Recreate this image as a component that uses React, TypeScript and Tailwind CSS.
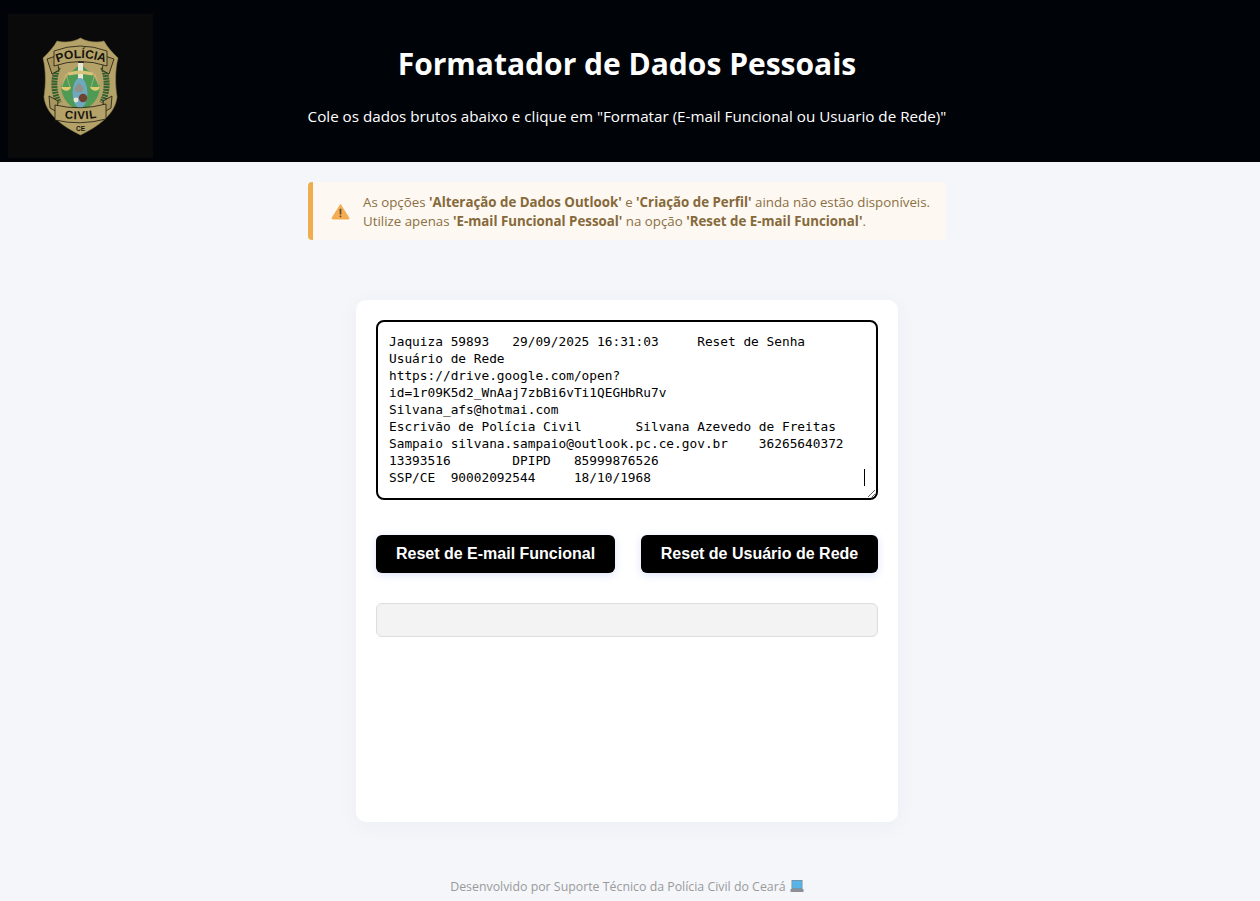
const RAW_DATA = `Jaquiza 59893\t29/09/2025 16:31:03\tReset de Senha
Usuário de Rede
https://drive.google.com/open?
id=1r09K5d2_WnAaj7zbBi6vTi1QEGHbRu7v
Silvana_afs@hotmai.com
Escrivão de Polícia Civil\tSilvana Azevedo de Freitas
Sampaio silvana.sampaio@outlook.pc.ce.gov.br\t36265640372
13393516\tDPIPD\t85999876526
SSP/CE\t90002092544\t18/10/1968`;

function Badge() {
  return (
    <svg viewBox="0 0 145 144" className="w-[145px] h-[144px] block">
      <rect width="145" height="144" fill="#0a0a0a" />
      {/* shield */}
      <path
        d="M72.5 24 C66 28 56 29 49 27 C46 33 41 38 35 44 C38 56 38 70 36 83 C38 101 56 113 72.5 121 C89 113 107 101 109 83 C107 70 107 56 110 44 C104 38 99 33 96 27 C89 29 79 28 72.5 24 Z"
        fill="#b5a268"
        stroke="#8f7f4d"
        strokeWidth="0.6"
      />
      {/* laurels */}
      <path d="M50 53 C45 64 45 78 51 89" fill="none" stroke="#35602f" strokeWidth="6" strokeDasharray="2 0.8" />
      <path d="M95 53 C100 64 100 78 94 89" fill="none" stroke="#35602f" strokeWidth="6" strokeDasharray="2 0.8" />
      {/* green field */}
      <path d="M72.5 50 L84 60 L92 72 C92 84 83 94 72.5 97 C62 94 53 84 53 72 L61 60 Z" fill="#4f9a54" />
      {/* sword and bar */}
      <rect x="70" y="44" width="6" height="5" fill="#3a2d1c" />
      <rect x="70" y="49" width="5" height="48" fill="#e9e6d6" />
      <path d="M59 59 Q72 54 86 59 L84 61.5 Q72 58.5 61 61.5 Z" fill="#d8c47a" />
      {/* scales */}
      <path d="M58 60 L54 73 M58 60 L62 73 M87 60 L83 73 M87 60 L91 73" stroke="#d2c080" strokeWidth="0.6" fill="none" />
      <path d="M53 73 H63 C62 78 55 78 53 73 Z" fill="#e0cb6c" />
      <path d="M82 73 H92 C91 78 84 78 82 73 Z" fill="#e0cb6c" />
      {/* blue oval */}
      <ellipse cx="72" cy="79" rx="7.5" ry="15" fill="#6fa9c0" />
      <path d="M66.5 74 L71 69 L76 74 L74 78 L67.5 78 Z" fill="#8f9288" />
      <circle cx="75" cy="84" r="4.2" fill="#6e4332" />
      <circle cx="68" cy="86" r="2.4" fill="#e9e6d6" />
      {/* top ribbon */}
      <path d="M39 45 L48 42 L51 56 L44 60 Z" fill="#a8955e" stroke="#1c1a12" strokeWidth="0.8" />
      <path d="M106 45 L97 42 L94 56 L101 60 Z" fill="#a8955e" stroke="#1c1a12" strokeWidth="0.8" />
      <path d="M46 37 Q72 27 99 37 L99 52 Q72 43 46 52 Z" fill="#b5a268" stroke="#1c1a12" strokeWidth="0.8" />
      <path id="arcTop" d="M48 49 Q72 39 98 49" fill="none" />
      <text fontFamily="'Liberation Sans', sans-serif" fontWeight="700" fontSize="12" fill="#16140d">
        <textPath href="#arcTop" startOffset="50%" textAnchor="middle">POLÍCIA</textPath>
      </text>
      {/* lower ribbon */}
      <path d="M41 82 L50 87 L49 98 L42 94 Z" fill="#a8955e" stroke="#1c1a12" strokeWidth="0.8" />
      <path d="M104 82 L95 87 L96 98 L103 94 Z" fill="#a8955e" stroke="#1c1a12" strokeWidth="0.8" />
      <path d="M47 91 Q72 97 98 90 L98 105 Q72 112 47 106 Z" fill="#b5a268" stroke="#1c1a12" strokeWidth="0.8" />
      <path id="arcBottom" d="M50 103 Q72 108 96 102" fill="none" />
      <text fontFamily="'Liberation Sans', sans-serif" fontWeight="700" fontSize="11.5" letterSpacing="0.7" fill="#16140d">
        <textPath href="#arcBottom" startOffset="50%" textAnchor="middle">CIVIL</textPath>
      </text>
      <text x="72.5" y="116.5" textAnchor="middle" fontFamily="'Liberation Sans', sans-serif" fontWeight="700" fontSize="6.5" fill="#16140d">CE</text>
    </svg>
  );
}

function WarningIcon() {
  return (
    <svg viewBox="0 0 20 18" className="w-[19px] h-[17px] shrink-0">
      <path d="M10 1.5 L19 16 Q19.2 17 18 17 H2 Q0.8 17 1 16 Z" fill="#f4ad52" stroke="#f0a544" strokeWidth="0.8" strokeLinejoin="round" />
      <rect x="9.1" y="6" width="1.8" height="6.2" rx="0.6" fill="#5d4a33" />
      <rect x="9.1" y="13.3" width="1.8" height="1.8" rx="0.6" fill="#5d4a33" />
    </svg>
  );
}

function LaptopIcon() {
  return (
    <svg viewBox="0 0 14 14" className="w-[14px] h-[14px] inline-block align-[-2px] ml-px">
      <rect x="1.5" y="1" width="11" height="9" fill="#7c8b99" />
      <rect x="2.2" y="1.7" width="9.6" height="7.6" fill="#58b4e6" />
      <rect x="0.5" y="10" width="13" height="3" fill="#8d8f95" />
    </svg>
  );
}

export default function App() {
  return (
    <div className="min-h-[901px] bg-[#f4f6fa] font-['Open_Sans','Noto_Sans',sans-serif]">
      <header className="h-[162px] bg-[#000308] flex">
        <div className="pl-2 pt-[14px] w-[153px] shrink-0">
          <Badge />
        </div>
        <div className="flex-1 pr-[159px] text-center text-white">
          <h1 className="mt-[42px] text-[30px] leading-[44px] font-bold">Formatador de Dados Pessoais</h1>
          <p className="mt-[19px] text-[15.2px] leading-[22px]">
            Cole os dados brutos abaixo e clique em "Formatar (E-mail Funcional ou Usuario de Rede)"
          </p>
        </div>
      </header>

      <main className="pr-[6px] flex flex-col items-center">
        <div className="mt-5 w-[638px] h-[58px] bg-[#fdf8f1] border-l-[5px] border-[#f0ad4e] rounded-[4px] flex items-center pl-[18px] gap-[13px] text-[13.3px] leading-[19px] text-[#8a7045]">
          <WarningIcon />
          <p className="pt-[2px]">
            As opções <b className="text-[#85693a]">'Alteração de Dados Outlook'</b> e <b className="text-[#85693a]">'Criação de Perfil'</b> ainda não estão disponíveis.
            <br />
            Utilize apenas <b className="text-[#85693a]">'E-mail Funcional Pessoal'</b> na opção <b className="text-[#85693a]">'Reset de E-mail Funcional'</b>.
          </p>
        </div>

        <section className="mt-[60px] w-[542px] h-[522px] bg-white rounded-[10px] p-5 shadow-[0_4px_24px_rgba(30,50,100,0.04)]">
          <div className="relative h-[180px]">
            <textarea
              defaultValue={RAW_DATA}
              spellCheck={false}
              className="block w-full h-full border-2 border-black rounded-[8px] pt-[11px] pb-[9px] px-[11px] bg-white text-black outline-none font-['DejaVu_Sans_Mono','Liberation_Mono',monospace] text-[12.8px] leading-[17px] [tab-size:8] whitespace-pre overflow-hidden"
            />
            {/* mouse pointer caught in the shot */}
            <span className="absolute left-[488px] top-[149px] w-px h-[17px] bg-black" />
          </div>

          <div className="mt-[35px] flex justify-between font-['Liberation_Sans',sans-serif]">
            <button className="w-[239px] h-[38px] bg-black text-white font-bold text-base rounded-[6px] shadow-[0_2px_8px_rgba(60,100,230,0.18)]">
              Reset de E-mail Funcional
            </button>
            <button className="w-[237px] h-[38px] bg-black text-white font-bold text-base rounded-[6px] shadow-[0_2px_8px_rgba(60,100,230,0.18)]">
              Reset de Usuário de Rede
            </button>
          </div>

          <div className="mt-[30px] h-[34px] bg-[#f3f3f3] border border-[#dddddd] rounded-[6px]" />
        </section>

        <footer className="mt-[55px] text-[12.35px] leading-5 text-[#9a9a9a]">
          Desenvolvido por Suporte Técnico da Polícia Civil do Ceará <LaptopIcon />
        </footer>
      </main>
    </div>
  );
}
